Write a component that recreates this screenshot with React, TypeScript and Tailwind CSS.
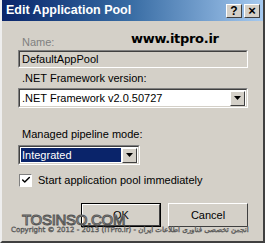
import { Check } from 'lucide-react'

const Arrow = () => (
  <svg width="7" height="4" viewBox="0 0 7 4">
    <path d="M0 0 H7 L3.5 4 Z" fill="#000" />
  </svg>
)

const DropButton = () => (
  <div className="w-[15px] h-[15px] bg-[#d4d0c8] border border-t-white border-l-white border-r-[#404040] border-b-[#404040] flex items-center justify-center">
    <Arrow />
  </div>
)

const App = () => {
  return (
    <div className="w-[265px] h-[243px] bg-[#d4d0c8] border-l-2 border-l-[#eeeeee] border-r-2 border-r-[#404040] border-b-2 border-b-[#404040] flex flex-col font-['Liberation_Sans',sans-serif] text-[11px] text-black overflow-hidden">
      {/* title bar */}
      <div className="h-[21px] shrink-0 bg-gradient-to-r from-[#0a246a] via-[#3a6ea5] to-[#a6caf0] flex items-center justify-between pl-[4px] pr-[3px]">
        <span className="text-white font-bold text-[12.5px]">Edit Application Pool</span>
        <div className="flex gap-[2px]">
          <div className="w-[16px] h-[14px] bg-[#d4d0c8] border border-t-white border-l-white border-r-[#404040] border-b-[#404040] flex items-center justify-center font-bold text-[12px] leading-none">?</div>
          <div className="w-[16px] h-[14px] bg-[#d4d0c8] border border-t-white border-l-white border-r-[#404040] border-b-[#404040] flex items-center justify-center font-bold text-[13px] leading-none">×</div>
        </div>
      </div>

      <div className="relative flex-1 flex flex-col pl-[16px] pr-[15px]">
        <div className="absolute left-[129px] top-[8px] font-bold text-[13px] font-['DejaVu_Sans',sans-serif] tracking-[-0.3px]">www.itpro.ir</div>

        <div className="mt-[14px] text-[#808080] pl-[4px] leading-[14px]">Name:</div>
        <div className="mt-[1px] h-[18px] border border-t-[#808080] border-l-[#808080] border-r-white border-b-white">
          <div className="h-full border border-t-[#404040] border-l-[#404040] border-r-[#d4d0c8] border-b-[#d4d0c8] pl-[2px] leading-[14px]">DefaultAppPool</div>
        </div>

        <div className="mt-[3px] pl-[4px] leading-[14px]">.NET Framework version:</div>
        <div className="mt-[3px] h-[20px] border border-t-[#808080] border-l-[#808080] border-r-white border-b-white">
          <div className="h-full bg-white border border-t-[#404040] border-l-[#404040] border-r-[#d4d0c8] border-b-[#d4d0c8] flex items-center justify-between pr-[1px]">
            <span className="pl-[2px]">.NET Framework v2.0.50727</span>
            <DropButton />
          </div>
        </div>

        <div className="mt-[19px] pl-[4px] leading-[14px]">Managed pipeline mode:</div>
        <div className="mt-[4px] w-[122px] h-[20px] border border-t-[#808080] border-l-[#808080] border-r-white border-b-white">
          <div className="h-full bg-white border border-t-[#404040] border-l-[#404040] border-r-[#d4d0c8] border-b-[#d4d0c8] flex items-center justify-between pr-[1px]">
            <span className="ml-[1px] pl-[1px] flex-1 h-[14px] bg-[#0a246a] text-white leading-[14px] mr-[1px]">Integrated</span>
            <DropButton />
          </div>
        </div>

        <div className="mt-[8px] h-[14px] flex items-center gap-[6px] pl-[1px]">
          <div className="w-[13px] h-[13px] bg-white border border-t-[#808080] border-l-[#808080] border-r-white border-b-white flex items-center justify-center">
            <Check size={10} strokeWidth={3.5} color="#000" />
          </div>
          <span>Start application pool immediately</span>
        </div>

        <div className="mt-[16px] flex justify-end gap-[7px]">
          <div className="w-[80px] h-[24px] border border-black">
            <div className="h-full border border-t-white border-l-white border-r-[#404040] border-b-[#404040] flex items-center justify-center">OK</div>
          </div>
          <div className="w-[80px] h-[24px] border border-t-white border-l-white border-r-[#404040] border-b-[#404040] flex items-center justify-center">Cancel</div>
        </div>

        <div className="absolute left-[20px] top-[191px] text-[15px] leading-none text-[#d4d0c8] tracking-[-0.3px] [-webkit-text-stroke:1px_#555]">TOSINSO.COM</div>
        <div className="absolute left-[9px] top-[206px] text-[7px] leading-none text-[#d4d0c8] font-['DejaVu_Sans',sans-serif] whitespace-nowrap [-webkit-text-stroke:0.5px_#555]">Copyright © 2012 - 2013 (ITPro.ir) - انجمن تخصصی فناوری اطلاعات ایران</div>
      </div>
    </div>
  )
}

export default App
